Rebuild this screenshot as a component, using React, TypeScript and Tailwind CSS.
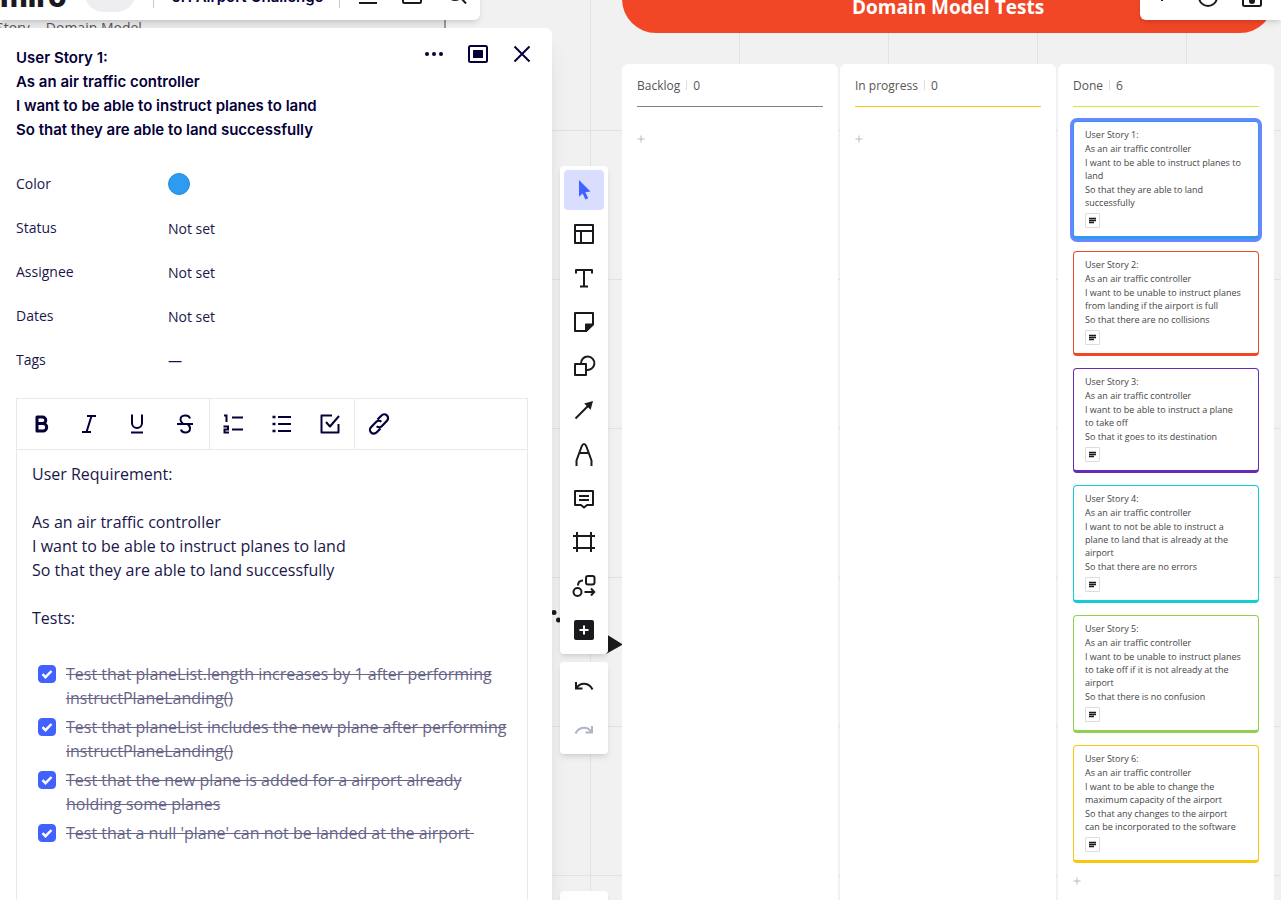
import React from "react";

type Story = {
  id: number;
  lines: string[];
  frame: string;
};

const stories: Story[] = [
  {
    id: 1,
    lines: ["As an air traffic controller", "I want to be able to instruct planes to land", "So that they are able to land successfully"],
    frame: "border-[#2d9bf0] ring-3 ring-[#6b84ff]",
  },
  {
    id: 2,
    lines: ["As an air traffic controller", "I want to be unable to instruct planes from landing if the airport is full", "So that there are no collisions"],
    frame: "border-[#f24726]",
  },
  {
    id: 3,
    lines: ["As an air traffic controller", "I want to be able to instruct a plane to take off", "So that it goes to its destination"],
    frame: "border-[#652cb3]",
  },
  {
    id: 4,
    lines: ["As an air traffic controller", "I want to not be able to instruct a plane to land that is already at the airport", "So that there are no errors"],
    frame: "border-[#12cdd4]",
  },
  {
    id: 5,
    lines: ["As an air traffic controller", "I want to be unable to instruct planes to take off if it is not already at the airport", "So that there is no confusion"],
    frame: "border-[#8fd14f]",
  },
  {
    id: 6,
    lines: ["As an air traffic controller", "I want to be able to change the maximum capacity of the airport", "So that any changes to the airport can be incorporated to the software"],
    frame: "border-[#fac710]",
  },
];

const tests = [
  "Test that planeList.length increases by 1 after performing instructPlaneLanding()",
  "Test that planeList includes the new plane after performing instructPlaneLanding()",
  "Test that the new plane is added for a airport already holding some planes",
  "Test that a null 'plane' can not be landed at the airport\u00a0",
];

function Icon({ children, className = "size-6" }: { children: React.ReactNode; className?: string }) {
  return (
    <svg viewBox="0 0 24 24" fill="none" stroke="currentColor" strokeWidth="2" aria-hidden="true" className={className}>
      {children}
    </svg>
  );
}

const tools: { label: string; art: React.ReactNode }[] = [
  {
    label: "Select",
    art: <path d="M7 2 L18.5 13.5 L13.4 14.2 L16.2 20.3 L13.4 21.6 L10.6 15.5 L7 18.8 Z" fill="currentColor" stroke="none" />,
  },
  {
    label: "Templates",
    art: <path d="M3 3h18v18H3zM3 9h18M9 9v12" strokeLinejoin="round" />,
  },
  {
    label: "Text",
    art: <path d="M4 7.5V4h16v3.5M12 4v16.5M8 20.5h8" strokeLinejoin="round" />,
  },
  {
    label: "Sticky note",
    art: (
      <>
        <path d="M3 3h18v11l-7 7H3z" strokeLinejoin="round" />
        <path d="M14 21v-6.5h7z" fill="currentColor" strokeLinejoin="round" />
      </>
    ),
  },
  {
    label: "Shapes",
    art: (
      <>
        <path d="M3 10h11v11H3z" strokeLinejoin="round" />
        <path d="M9 9.5a6.7 6.7 0 1 1 5.5 6.3" />
      </>
    ),
  },
  {
    label: "Connection line",
    art: (
      <>
        <path d="M3.5 20.5 16 8" />
        <path d="M21 3 18.6 11.8 12.2 5.4z" fill="currentColor" stroke="none" />
      </>
    ),
  },
  {
    label: "Pen",
    art: <path d="M4.500 24v-5.500L9.800 4Q12 0 14.200 4L19.500 18.500V24M7.800 11h8.400" strokeLinejoin="round" />,
  },
  {
    label: "Comment",
    art: <path d="M3 5h18v14h-6l-3 2.600L9 19H3zM7 10h10M7 14h10" strokeLinejoin="round" />,
  },
  {
    label: "Frame",
    art: <path d="M5 2v20M19 2v20M1 6h22M1 18h22" />,
  },
  {
    label: "Mind map",
    art: (
      <>
        <rect x="14" y="2" width="8.500" height="8.500" rx="2" />
        <circle cx="5.500" cy="18" r="4" />
        <path d="M6 11.500Q6 6.500 11 6.500M12.500 18H22M19 14.500l3.200 3.500L19 21.500" />
      </>
    ),
  },
  {
    label: "More",
    art: (
      <>
        <rect x="2" y="2" width="20" height="20" rx="2" fill="currentColor" stroke="none" />
        <path d="M12 7.500v9M7.500 12h9" stroke="#fff" />
      </>
    ),
  },
];

const formatGroups: { label: string; art: React.ReactNode }[][] = [
  [
    { label: "Bold", art: <path d="M8 5h5.500a3.200 3.200 0 0 1 0 6.600H8zM8 11.600h6a3.500 3.500 0 0 1 0 7.400H8z" strokeWidth="3" strokeLinejoin="round" /> },
    { label: "Italic", art: <path d="M10 4h9M5 20h9M14.500 4l-5 16" /> },
    { label: "Underline", art: <path d="M7 2.500v8.500a5 5 0 0 0 10 0V2.500M6 20.500h12" /> },
    {
      label: "Strikethrough",
      art: <path d="M17 6.500C16 2.200 7.500 2.400 7.500 7.400c0 1.800 1 3.200 2.500 4.100M4 12h16M8 17.500c1 4.300 9 3.800 9-1.100 0-1.600-.7-3-2.200-4" />,
    },
  ],
  [
    {
      label: "Numbered list",
      art: <path d="M2 3.500h2.500V10M1.500 14.500h4.500v3H2.500v3H7M10 5.500h11M10 17.500h11" />,
    },
    {
      label: "Bulleted list",
      art: (
        <>
          <path d="M8 5h13M8 12h13M8 19h13" />
          <path d="M2.500 5h3M2.500 12h3M2.500 19h3" strokeWidth="2.500" />
        </>
      ),
    },
    { label: "Checklist", art: <path d="M14 3.500H3.500v17h17V12M8 10l4 4.500L21 4" strokeLinejoin="round" /> },
  ],
  [
    {
      label: "Link",
      art: (
        <path
          d="m10.500 7.500 4-4a3.600 3.600 0 0 1 5.500 5.200l-5.300 5.500a3.500 3.500 0 0 1-5 0M13.500 16.500l-4 4A3.600 3.600 0 0 1 4 15.300l5.300-5.500a3.500 3.500 0 0 1 5 0"
          strokeWidth="2.200"
        />
      ),
    },
  ],
];

function TopBar() {
  return (
    <header className="z-10 -mt-9 flex h-14 w-[480px] items-center rounded-br-md bg-white text-[#1a1a1e] shadow-md">
      <a href="#home" className="w-[76px] pt-2 text-3xl leading-10 font-extrabold font-['Inter',sans-serif]">
        miro
      </a>
      <span className="ml-2 h-10 w-[52px] rounded-full bg-[#eeeef1]" />
      <span className="ml-[17px] h-8 w-px bg-[#c7c5d6]" />
      <button type="button" className="ml-[18px] w-[152px] pt-2.5 text-left text-[15px] font-semibold whitespace-nowrap text-[#050038] font-['Inter',sans-serif]">
        JH Airport Challenge
      </button>
      <span className="ml-[15px] h-8 w-px bg-[#c7c5d6]" />
      <button type="button" aria-label="Settings" className="ml-4">
        <Icon><path d="M3 4h18M3 12h18M3 23h18" /></Icon>
      </button>
      <button type="button" aria-label="Export" className="ml-5">
        <Icon><path d="M3 14v7.500a1.500 1.500 0 0 0 1.500 1.500h15a1.500 1.500 0 0 0 1.500-1.500V14M12 2v14" /></Icon>
      </button>
      <button type="button" aria-label="Search" className="ml-5">
        <Icon><circle cx="11" cy="12" r="8" /><path d="m16 17 6 6.500" /></Icon>
      </button>
    </header>
  );
}

function CardPanel() {
  const fields = ["Status", "Assignee", "Dates", "Tags"];
  return (
    <aside className="z-10 flex grow flex-col rounded-tr-md bg-white px-4 pt-[18px] text-[#1a164a] shadow-xl">
      <div className="flex items-start justify-between text-[#050038]">
        <h1 className="text-[15px] leading-6 font-semibold font-['Inter',sans-serif]">
          User Story 1:
          <br />
          As an air traffic controller
          <br />
          I want to be able to instruct planes to land
          <br />
          So that they are able to land successfully
        </h1>
        <div className="mr-0.5 -mt-1 flex gap-5">
          <button type="button" aria-label="More options">
            <Icon>
              <g fill="currentColor" stroke="none">
                <circle cx="5" cy="12" r="2" />
                <circle cx="12" cy="12" r="2" />
                <circle cx="19" cy="12" r="2" />
              </g>
            </Icon>
          </button>
          <button type="button" aria-label="Expand card">
            <Icon>
              <rect x="3" y="4" width="18" height="16" rx="1.500" />
              <rect x="7" y="8" width="10" height="8" rx="0.500" fill="currentColor" stroke="none" />
            </Icon>
          </button>
          <button type="button" aria-label="Close">
            <Icon><path d="m4.500 4.500 15 15M19.500 4.500l-15 15" /></Icon>
          </button>
        </div>
      </div>

      <dl className="mt-5 grid grid-cols-[152px_1fr] text-sm">
        <dt className="flex h-11 items-center">Color</dt>
        <dd className="flex h-11 items-center">
          <button type="button" aria-label="Blue" className="size-[22px] rounded-full border border-[#298bd8] bg-[#2d9bf0]" />
        </dd>
        {fields.map((field) => (
          <React.Fragment key={field}>
            <dt className="flex h-11 items-center">{field}</dt>
            <dd className="flex h-11 items-center pt-0.5">{field === "Tags" ? "—" : "Not set"}</dd>
          </React.Fragment>
        ))}
      </dl>

      <section className="mt-4 mr-2 flex grow flex-col border border-b-0 border-[#e9e9ec]">
        <div role="toolbar" className="flex h-[51px] border-b border-[#e9e9ec] text-[#050038]">
          {formatGroups.map((group, i) => (
            <div key={i} className="flex border-r border-[#e9e9ec] last:border-r-0">
              {group.map((b) => (
                <button key={b.label} type="button" aria-label={b.label} className="flex w-12 items-center justify-center">
                  <Icon>{b.art}</Icon>
                </button>
              ))}
            </div>
          ))}
        </div>
        <div className="px-[15px] pt-3 text-base leading-6">
          <p>User Requirement:</p>
          <p className="mt-6">
            As an air traffic controller
            <br />
            I want to be able to instruct planes to land
            <br />
            So that they are able to land successfully
          </p>
          <p className="mt-6">Tests:</p>
          <ul className="mt-8 flex flex-col gap-[5px]">
            {tests.map((test, i) => (
              <li key={test} className="flex gap-2.5 pl-1.5">
                <span className="mt-[3px] grid size-[18px] shrink-0">
                  <input
                    id={`test-${i}`}
                    type="checkbox"
                    defaultChecked
                    className="peer col-start-1 row-start-1 size-[18px] appearance-none rounded-sm border border-[#4262ff] checked:bg-[#4262ff]"
                  />
                  <svg viewBox="0 0 18 18" fill="none" stroke="#fff" strokeWidth="2.500" aria-hidden="true" className="pointer-events-none invisible col-start-1 row-start-1 size-[18px] peer-checked:visible">
                    <path d="m4.500 9.200 3 3 6-6.200" />
                  </svg>
                </span>
                <label htmlFor={`test-${i}`} className="text-[#686487] line-through">
                  {test}
                </label>
              </li>
            ))}
          </ul>
        </div>
      </section>
    </aside>
  );
}

function ToolColumn() {
  return (
    <nav aria-label="Tools" className="ml-2 flex w-12 shrink-0 flex-col gap-2 pt-[166px] text-[#1a1a1e]">
      <div className="z-10 flex flex-col gap-1 rounded-sm bg-white p-1 shadow-md">
        {tools.map((tool, i) => (
          <button
            key={tool.label}
            type="button"
            aria-label={tool.label}
            className={`flex h-10 items-center justify-center rounded-sm ${i === 0 ? "bg-[#d9deff] text-[#4262ff]" : ""}`}
          >
            <Icon>{tool.art}</Icon>
          </button>
        ))}
      </div>
      <div className="z-10 flex flex-col gap-1 rounded-sm bg-white p-1 shadow-md">
        <button type="button" aria-label="Undo" className="flex h-10 items-center justify-center">
          <Icon><path d="M4 8v6.500h6.500M4.500 14C8 8 17 8 20.500 15.500" /></Icon>
        </button>
        <button type="button" aria-label="Redo" disabled className="flex h-10 items-center justify-center text-[#afb3c6]">
          <Icon><path d="M20 8v6.500h-6.500M19.500 14C16 8 7 8 3.500 15.500" /></Icon>
        </button>
      </div>
      <div className="mt-[129px] h-12 shrink-0 rounded-sm bg-white shadow-md" />
    </nav>
  );
}

function StoryCard({ story }: { story: Story }) {
  return (
    <article className={`rounded-sm border border-b-3 bg-white pt-1.5 pr-[15px] pb-2 pl-[11px] ${story.frame}`}>
      <div className="flex flex-col gap-px text-[9px] leading-[13px] text-[#444]">
        <p>User Story {story.id}:</p>
        {story.lines.map((line) => (
          <p key={line}>{line}</p>
        ))}
      </div>
      <button type="button" aria-label="Show description" className="mt-1 flex size-[15px] items-center justify-center rounded-[1px] border border-[#ddd]">
        <svg viewBox="0 0 7 7" stroke="#1a1a1a" strokeWidth="1.400" aria-hidden="true" className="size-[7px]">
          <path d="M0 1.500h7M0 3.500h7M0 5.500h5" />
        </svg>
      </button>
    </article>
  );
}

function AddCard() {
  return (
    <button type="button" aria-label="Add card" className="flex size-2 items-center justify-center text-[#bbb]">
      <svg viewBox="0 0 8 8" stroke="currentColor" aria-hidden="true" className="size-2 shrink-0">
        <path d="M4 0.500v7M0.500 4h7" />
      </svg>
    </button>
  );
}

function Column({ title, count, rule, children }: { title: string; count: number; rule: string; children: React.ReactNode }) {
  return (
    <section className="rounded-t-md bg-white px-[15px] pt-3">
      <h3 className={`flex h-[31px] items-start border-b text-xs leading-5 text-[#555] ${rule}`}>
        {title}
        <span className="mx-1.5 mt-1 h-2.5 w-px bg-[#ddd]" />
        {count}
      </h3>
      {children}
    </section>
  );
}

function Board() {
  return (
    <main className="mr-[7px] ml-3.5 flex min-w-0 grow flex-col">
      <h2 className="-mt-[52px] flex h-[85px] shrink-0 items-end justify-center rounded-[34px] bg-[#f24726] pb-[11px] text-[19px] leading-[30px] font-bold text-white">
        Domain Model Tests
      </h2>
      <div className="mt-[31px] grid grow grid-cols-3 gap-0.5">
        <Column title="Backlog" count={0} rule="border-[#808080]">
          <div className="mt-7"><AddCard /></div>
        </Column>
        <Column title="In progress" count={0} rule="border-[#fac710]">
          <div className="mt-7"><AddCard /></div>
        </Column>
        <Column title="Done" count={6} rule="border-[#cee741]">
          <div className="mt-3.5 flex flex-col gap-3">
            {stories.map((story) => (
              <StoryCard key={story.id} story={story} />
            ))}
          </div>
          <div className="mt-3.5"><AddCard /></div>
        </Column>
      </div>
    </main>
  );
}

export default function App() {
  return (
    <div className="relative flex h-screen overflow-hidden bg-[#f1f1f1] bg-[linear-gradient(to_right,#e2e2e2_1px,transparent_1px),linear-gradient(to_bottom,#e2e2e2_1px,transparent_1px)] bg-[size:149px_149px] bg-[position:143px_130px] font-['Open_Sans',sans-serif]">
      <svg viewBox="0 0 70 44" className="absolute top-[610px] left-[552px] h-11 w-[70px]" fill="#1a1a1a" aria-hidden="true">
        <circle cx="2" cy="2.500" r="2.500" />
        <circle cx="6.500" cy="10" r="2.500" />
        <path d="M54 24v20l17-9.500z" />
      </svg>
      <div className="flex w-[552px] shrink-0 flex-col">
        <TopBar />
        <div className="flex h-2 w-[446px] gap-4 overflow-hidden border-r-2 border-[#999] bg-[#e8e8ea] text-sm leading-4 text-[#555]">
          <span className="-ml-1">Story</span>
          <span>Domain Model</span>
        </div>
        <CardPanel />
      </div>
      <ToolColumn />
      <Board />
      <div className="absolute -top-9 right-0 z-10 flex h-14 w-[141px] items-end gap-5 rounded-bl-md bg-white pb-3 pl-3 text-[#1a1a1e] shadow-md">
        <button type="button" aria-label="Reactions"><Icon><path d="M2 6h18M10 0v17" /></Icon></button>
        <button type="button" aria-label="Timer"><Icon><circle cx="12" cy="13" r="9" /></Icon></button>
        <button type="button" aria-label="Capture">
          <Icon>
            <rect x="3" y="4" width="18" height="18" rx="1.500" />
            <circle cx="12" cy="17" r="3" fill="currentColor" stroke="none" />
          </Icon>
        </button>
      </div>
    </div>
  );
}
